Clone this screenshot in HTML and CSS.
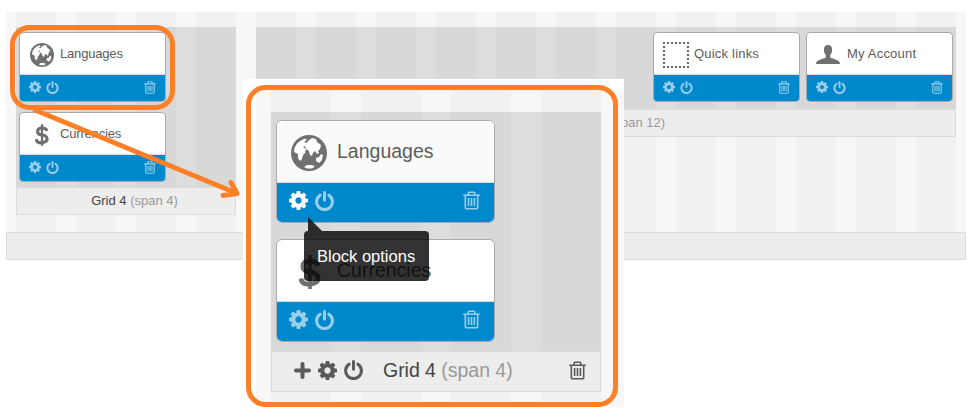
FILE: index.html
```html
<!DOCTYPE html>
<html lang="en">
<head>
<meta charset="utf-8">
<title>Layout builder</title>
<link rel="stylesheet" href="styles.css">
</head>
<body>
<svg class="defs" aria-hidden="true">
  <symbol id="cog" viewBox="128 128 1536 1536"><path d="M1152 896q0-106-75-181t-181-75-181 75-75 181 75 181 181 75 181-75 75-181zm512-109v222q0 12-8 23t-20 13l-185 28q-19 54-39 91 35 50 107 138 10 12 10 25t-9 23q-27 37-99 108t-94 71q-12 0-26-9l-138-108q-44 23-91 38-16 136-29 186-7 28-36 28h-222q-14 0-24.500-8.500t-11.500-21.500l-28-184q-49-16-90-37l-141 107q-10 9-25 9-14 0-25-11-126-114-165-168-7-10-7-23 0-12 8-23 15-21 51-66.500t54-70.500q-27-50-41-99l-183-27q-13-2-21-12.500t-8-23.500v-222q0-12 8-23t19-13l186-28q14-46 39-92-40-57-107-138-10-12-10-24 0-10 9-23 26-36 98.500-107.500t94.500-71.500q13 0 26 10l138 107q44-23 91-38 16-136 29-186 7-28 36-28h222q14 0 24.500 8.500t11.500 21.500l28 184q49 16 90 37l142-107q9-9 24-9 13 0 25 10 129 119 165 170 7 8 7 22 0 12-8 23-15 21-51 66.500t-54 70.500q26 50 41 98l183 28q13 2 21 12.500t8 23.500z"/></symbol>
  <symbol id="power" viewBox="0 0 18 19"><path d="M4.800 4A7.500 7.500 0 1 0 13.200 4" fill="none" stroke="currentColor" stroke-width="2.900" stroke-linecap="round"/><path d="M9 1.400v7.400" stroke="currentColor" stroke-width="2.800" stroke-linecap="round"/></symbol>
  <symbol id="trash" viewBox="0 0 17 19"><path d="M.2 4.200h16.600M5.200 4V2.200q0-1 1-1h4.600q1 0 1 1V4M2.300 4.500V16q0 1.800 1.600 1.800h9.200q1.600 0 1.600-1.800V4.500M5.600 7v8M8.500 7v8M11.400 7v8" fill="none" stroke="currentColor" stroke-width="1.600"/></symbol>
  <symbol id="plus" viewBox="0 0 17 17"><path d="M8.500 2v13M2 8.500h13" stroke="currentColor" stroke-width="4" stroke-linecap="round"/></symbol>
  <symbol id="globe" viewBox="0 0 36 36"><circle cx="18" cy="18" r="18"/><path class="land" d="M3.500 13 6 8.500 9 6l5-2.500 2 1.500-3 2 3 1-1 3-3 1 3 2-1 4-2 2-1 4-2 2-2-3v-4l-4-2zM17 6l4-3 4 1 1 3 4 3-1 4-2 2 1 2-2 1-2-3-2 2-1 3-2-1-1-4-3-2-1-4 2-2zM25 23l3-1 2-3 2 1-1 5-3 3-3-2zM13 32l3-2h5l3 1.500-3 2h-5z"/></symbol>
  <symbol id="dollar" viewBox="0 0 22 34"><path d="M19 10.500Q17.500 6 11 6T4 11t7 6 8 6-8 6-9-5.500" fill="none" stroke="currentColor" stroke-width="4.800"/><path d="M11 0v34" stroke="currentColor" stroke-width="3.600"/></symbol>
  <symbol id="user" viewBox="0 0 24 19"><path d="M12 0c3 0 4.300 2 4.100 5-.1 2.600-1 4-1.900 5.200v2.300c1 1.300 9.800 1.600 9.800 6.500H0c0-4.900 8.800-5.200 9.800-6.500v-2.300C8.900 9 8 7.600 7.900 5 7.700 2 9 0 12 0z"/></symbol>
</svg>

<main class="builder">
  <div class="row">
    <section class="grid grid-4">
      <div class="blocks">
        <article class="block">
          <header class="head"><svg class="icon-globe"><use href="#globe"/></svg><span>Languages</span></header>
          <footer class="tools"><svg class="cog"><use href="#cog"/></svg><svg class="power"><use href="#power"/></svg><svg class="trash"><use href="#trash"/></svg></footer>
        </article>
        <article class="block">
          <header class="head"><svg class="icon-dollar"><use href="#dollar"/></svg><span>Currencies</span></header>
          <footer class="tools"><svg class="cog"><use href="#cog"/></svg><svg class="power"><use href="#power"/></svg><svg class="trash"><use href="#trash"/></svg></footer>
        </article>
      </div>
      <div class="caption"><span>Grid 4 <em>(span 4)</em></span></div>
    </section>
    <section class="grid grid-12">
      <div class="blocks side">
        <article class="block">
          <header class="head"><svg class="icon-box" viewBox="0 0 26 26"><path d="M0 1h26M0 25h26M1 4v20M25 4v20"/></svg><span>Quick links</span></header>
          <footer class="tools"><svg class="cog"><use href="#cog"/></svg><svg class="power"><use href="#power"/></svg><svg class="trash"><use href="#trash"/></svg></footer>
        </article>
        <article class="block">
          <header class="head"><svg class="icon-user"><use href="#user"/></svg><span>My Account</span></header>
          <footer class="tools"><svg class="cog"><use href="#cog"/></svg><svg class="power"><use href="#power"/></svg><svg class="trash"><use href="#trash"/></svg></footer>
        </article>
      </div>
      <div class="caption"><span>Grid 12 <em>(span 12)</em></span></div>
    </section>
  </div>
  <div class="bar"></div>
</main>

<aside class="inset">
  <div class="stage">
    <section class="grid">
      <div class="blocks">
        <article class="block hover">
          <header class="head"><svg class="icon-globe"><use href="#globe"/></svg><span>Languages</span></header>
          <footer class="tools"><svg class="cog active"><use href="#cog"/></svg><svg class="power"><use href="#power"/></svg><svg class="trash"><use href="#trash"/></svg></footer>
        </article>
        <article class="block">
          <header class="head"><svg class="icon-dollar"><use href="#dollar"/></svg><span>Currencies</span></header>
          <footer class="tools"><svg class="cog"><use href="#cog"/></svg><svg class="power"><use href="#power"/></svg><svg class="trash"><use href="#trash"/></svg></footer>
        </article>
      </div>
      <div class="caption"><svg class="plus"><use href="#plus"/></svg><svg class="cog"><use href="#cog"/></svg><svg class="power"><use href="#power"/></svg><span>Grid 4 <em>(span 4)</em></span><svg class="trash"><use href="#trash"/></svg></div>
    </section>
  </div>
  <div class="tooltip">Block options</div>
</aside>

<svg class="marks" viewBox="0 0 968 418">
  <rect x="12.500" y="27.500" width="160" height="80" rx="17"/>
  <rect x="248.500" y="87.500" width="367" height="317" rx="17"/>
  <path d="M35 110 236 193M231 182.500l6 11-14 2"/>
</svg>
</body>
</html>
```

FILE: styles.css
```css
* { box-sizing: border-box; }
body {
  margin: 0;
  width: 968px;
  height: 418px;
  position: relative;
  overflow: hidden;
  background: #fff;
  font: 13px/18px "Liberation Sans", Arial, sans-serif;
  color: #5c5c5c;
}
svg { display: block; flex: none; fill: currentColor; }
.defs { position: absolute; width: 0; height: 0; }
.land { fill: #fff; }

.builder {
  width: 960px;
  margin: 0 0 0 6px;
  padding-top: 12px;
}
.row {
  height: 220px;
  padding: 15px 10px 0;
  display: flex;
  gap: 20px;
  align-items: flex-start;
  background: repeating-linear-gradient(90deg, #f1f1f1 0 40px, #f7f7f7 40px 60px) 10px 0 / 940px 100% no-repeat #f7f7f7;
}
.bar { height: 28px; background: #ededed; border: 1px solid #dcdcdc; }
.grid-4 { width: 220px; }
.grid-12 { width: 700px; }
.blocks {
  height: 160px;
  padding: 5px 3px;
  display: flex;
  flex-direction: column;
  gap: 10px;
  background: rgba(0, 0, 0, .1);
}
.blocks.side { height: 82px; flex-direction: row; justify-content: flex-end; gap: 6px; }
.block {
  width: 147px;
  height: 70px;
  border: 1px solid #aaa;
  border-radius: 4px;
  background: #fff;
  overflow: hidden;
}
.head {
  height: 42px;
  display: flex;
  align-items: center;
  padding-left: 10px;
  border-bottom: 1px solid #ddd;
  letter-spacing: -.18px;
}
.side .head { letter-spacing: .2px; }
.icon-globe { width: 24px; height: 24px; margin: 2px 6px 0 0; color: #707070; }
.icon-dollar { width: 14px; height: 22px; margin: 2px 11px 0 5px; color: #707070; }
.icon-box { width: 26px; height: 26px; margin: 2px 5px 0 -1px; stroke: #666; stroke-width: 2; stroke-dasharray: 2; }
.icon-user { width: 24px; height: 19px; margin: 2px 7px 0 -1px; color: #707070; }
.tools {
  height: 26px;
  display: flex;
  align-items: center;
  padding: 0 9px 2px;
  background: #08c;
  color: #99cfeb;
}
.cog { width: 12px; height: 12px; }
.power { width: 13px; height: 13px; margin-left: 5px; }
.trash { width: 12px; height: 13px; margin-left: auto; }
.caption {
  height: 28px;
  display: flex;
  align-items: center;
  justify-content: center;
  padding: 0 0 1px 17px;
  background: #ededed;
  border: 1px solid #dcdcdc;
  color: #444;
}
.caption em { font-style: normal; color: #999; }

.inset {
  position: absolute;
  left: 243px;
  top: 79px;
  width: 381px;
  height: 339px;
  padding: 11px 0 0 13px;
  background: #fff;
  font-size: 19.500px;
  line-height: 27px;
}
.stage {
  height: 316px;
  padding: 22px 0 0 15px;
  background: repeating-linear-gradient(90deg, #f1f1f1 0 60px, #f7f7f7 60px 90px) 15px 0 / 330px 100% no-repeat #f7f7f7;
}
.inset .grid { width: 330px; }
.inset .blocks { height: 239px; padding: 8px 5px; gap: 16px; }
.inset .block { width: 219px; height: 103px; border-radius: 6px; }
.inset .head { height: 62px; padding-left: 14px; letter-spacing: 0; }
.inset .tools { height: 39px; padding: 0 14px 4px 12px; }
.inset .hover .head { background: #fafafa; }
.inset .icon-globe { width: 36px; height: 36px; margin: 3px 10px 0 0; }
.inset .icon-dollar { width: 22px; height: 34px; margin: 3px 16px 0 8px; }
.inset .cog { width: 19px; height: 19px; }
.inset .active { color: #fff; }
.inset .power { width: 19px; height: 20px; margin-left: 7px; }
.inset .trash { width: 17px; height: 19px; }
.inset .caption { height: 41px; justify-content: flex-start; padding: 0 14px 3px 22px; }
.inset .plus { width: 17px; height: 17px; margin-right: 7px; }
.inset .caption svg { color: #5a5a5a; }
.inset .caption span { margin-left: 20px; letter-spacing: -.03px; }
.tooltip {
  position: absolute;
  left: 61px;
  top: 152px;
  width: 125px;
  height: 50px;
  padding: 12px 0 0 13px;
  border-radius: 4px;
  background: rgba(0, 0, 0, .8);
  color: #fff;
  font-size: 16.500px;
}
.tooltip::before {
  content: "";
  position: absolute;
  left: 4px;
  top: -14px;
  border-left: 14px solid rgba(0, 0, 0, .8);
  border-top: 14px solid transparent;
}
.marks {
  position: absolute;
  left: 0;
  top: 0;
  width: 968px;
  height: 418px;
  fill: none;
  stroke: #ff7f27;
  stroke-width: 5;
  stroke-linecap: round;
  stroke-linejoin: round;
}
```
